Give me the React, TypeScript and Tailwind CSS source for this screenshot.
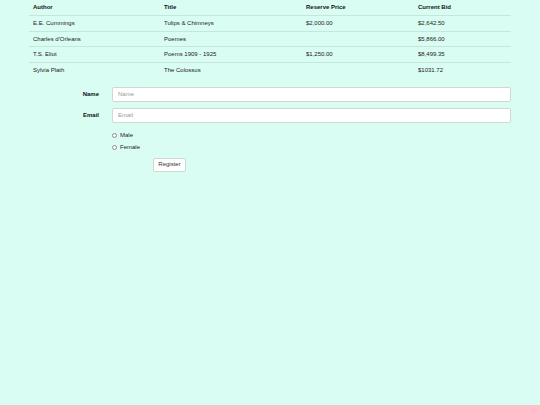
import React from "react";

const rows = [
  { author: "E.E. Cummings", title: "Tulips & Chimneys", reserve: "$2,000.00", bid: "$2,642.50" },
  { author: "Charles d'Orleans", title: "Poemes", reserve: "", bid: "$5,866.00" },
  { author: "T.S. Eliot", title: "Poems 1909 - 1925", reserve: "$1,250.00", bid: "$8,499.35" },
  { author: "Sylvia Plath", title: "The Colossus", reserve: "", bid: "$1031.72" },
];

const cols = "grid grid-cols-[131px_142px_112px_97px]";

const App = () => {
  return (
    <div className="min-h-[405px] w-full bg-[#dafdf3] font-['Liberation_Sans',Arial,sans-serif] text-[6px] text-[#222]">
      <div className="ml-[29px] w-[482px]">
        <div className={`${cols} h-[15px] items-center font-bold text-[#111]`}>
          <div className="pl-[4px]">Author</div>
          <div className="pl-[4px]">Title</div>
          <div className="pl-[4px]">Reserve Price</div>
          <div className="pl-[4px]">Current Bid</div>
        </div>
        {rows.map((r) => (
          <div
            key={r.author}
            className={`${cols} h-[15.7px] items-center border-t border-[#c6e6dd]`}
          >
            <div className="pl-[4px]">{r.author}</div>
            <div className="pl-[4px]">{r.title}</div>
            <div className="pl-[4px]">{r.reserve}</div>
            <div className="pl-[4px]">{r.bid}</div>
          </div>
        ))}
      </div>

      <form className="ml-[29px] mt-[9px] flex w-[482px] flex-col">
        <div className="flex h-[15px] items-center">
          <label className="w-[70px] text-right font-bold text-[#111]">Name</label>
          <input
            placeholder="Name"
            className="ml-[13px] h-[15px] flex-1 rounded-[2px] border border-[#cfd8d5] bg-white px-[5px] text-[6px] outline-none placeholder:text-[#9a9a9a]"
          />
        </div>
        <div className="mt-[6px] flex h-[15px] items-center">
          <label className="w-[70px] text-right font-bold text-[#111]">Email</label>
          <input
            placeholder="Email"
            className="ml-[13px] h-[15px] flex-1 rounded-[2px] border border-[#cfd8d5] bg-white px-[5px] text-[6px] outline-none placeholder:text-[#9a9a9a]"
          />
        </div>
        <div className="ml-[83px] mt-[9px] flex flex-col gap-[4px]">
          <label className="flex h-[8px] items-center gap-[3px]">
            <span className="h-[5px] w-[5px] rounded-full border border-[#8a8a8a] bg-white" />
            <span>Male</span>
          </label>
          <label className="flex h-[8px] items-center gap-[3px]">
            <span className="h-[5px] w-[5px] rounded-full border border-[#8a8a8a] bg-white" />
            <span>Female</span>
          </label>
        </div>
        <div className="ml-[124px] mt-[6px]">
          <button
            type="button"
            className="h-[14px] w-[33px] rounded-[2px] border border-[#d0d8d5] bg-white text-[6px] text-[#333]"
          >
            Register
          </button>
        </div>
      </form>
    </div>
  );
};

export default App;
